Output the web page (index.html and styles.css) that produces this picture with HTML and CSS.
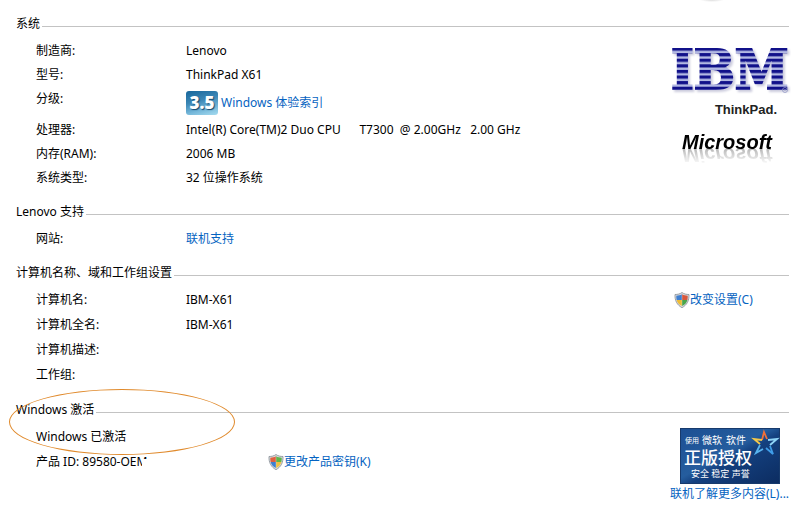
FILE: index.html
```html
<!DOCTYPE html>
<html lang="zh-CN">
<head>
<meta charset="utf-8">
<meta name="viewport" content="width=device-width,initial-scale=1.0">
<title>系统</title>
<link rel="stylesheet" href="styles.css">
</head>

<body>
<svg class="defs" width="0" height="0" aria-hidden="true">
	<defs>
		<symbol id="shield" viewBox="0 0 16 16">
			<path d="M8 .5C10 2 12.500 2.500 15 2.500C15.300 8.500 13 13 8 15.700C3 13 .7 8.500 1 2.500C3.500 2.500 6 2 8 .5z" fill="#d9dcdf" stroke="#858c93" stroke-width=".8"/>
			<path d="M7.800 2.300V8H2.600C2.300 6.500 2.200 5 2.300 3.800C4.500 3.700 6.200 3.300 7.800 2.300z" fill="#3f7fd0"/>
			<path d="M8.200 2.300V8H13.400C13.700 6.500 13.800 5 13.700 3.800C11.500 3.700 9.800 3.300 8.200 2.300z" fill="#d8573c"/>
			<path d="M7.800 8V14C5 12.500 3.200 10.500 2.600 8z" fill="#eebc35"/>
			<path d="M8.200 8V14C11 12.500 12.800 10.500 13.400 8z" fill="#4aa54a"/>
		</symbol>
		<symbol id="shield-alt" viewBox="0 0 16 16">
			<path d="M8 .5C10 2 12.500 2.500 15 2.500C15.300 8.500 13 13 8 15.700C3 13 .7 8.500 1 2.500C3.500 2.500 6 2 8 .5z" fill="#d9dcdf" stroke="#858c93" stroke-width=".8"/>
			<path d="M7.800 2.300V8H2.600C2.300 6.500 2.200 5 2.300 3.800C4.500 3.700 6.200 3.300 7.800 2.300z" fill="#e0603f"/>
			<path d="M8.200 2.300V8H13.400C13.700 6.500 13.800 5 13.700 3.800C11.500 3.700 9.800 3.300 8.200 2.300z" fill="#5fb548"/>
			<path d="M7.800 8V14C5 12.500 3.200 10.500 2.600 8z" fill="#3f7fd0"/>
			<path d="M8.200 8V14C11 12.500 12.800 10.500 13.400 8z" fill="#f0c040"/>
		</symbol>
	</defs>
</svg>

<main class="page">
	<section class="group">
		<h2 class="group-title">系统</h2>
		<div class="group-body">
			<dl class="list">
				<div class="row"><dt>制造商:</dt><dd>Lenovo</dd></div>
				<div class="row"><dt>型号:</dt><dd>ThinkPad X61</dd></div>
				<div class="row row-rating">
					<dt>分级:</dt>
					<dd class="rating"><span class="score">3.5</span><a href="#">Windows 体验索引</a></dd>
				</div>
				<div class="row"><dt>处理器:</dt><dd class="pre">Intel(R) Core(TM)2 Duo CPU      T7300  @ 2.00GHz   2.00 GHz</dd></div>
				<div class="row"><dt>内存(RAM):</dt><dd>2006 MB</dd></div>
				<div class="row"><dt>系统类型:</dt><dd>32 位操作系统</dd></div>
			</dl>
			<div class="logos">
				<svg width="124" height="56" viewBox="0 0 124 56" role="img" aria-label="IBM">
					<defs>
						<pattern id="stripes" width="10" height="5.6" y="8.500" patternUnits="userSpaceOnUse">
							<rect width="10" height="5.6" fill="#b3b9e3"/>
							<rect width="10" height="3.200" fill="#11118a"/>
						</pattern>
					</defs>
					<text class="ibm" x="3" y="50" fill="url(#stripes)" stroke="url(#stripes)">IBM</text>
					<circle cx="117" cy="51" r="2.500" fill="none" stroke="#9297c4" stroke-width=".8"/>
					<circle cx="117" cy="51" r=".8" fill="#9297c4"/>
				</svg>
				<div class="thinkpad">ThinkPad.</div>
				<div class="microsoft">Microsoft</div>
			</div>
		</div>
	</section>

	<section class="group">
		<h2 class="group-title">Lenovo 支持</h2>
		<div class="group-body">
			<dl class="list">
				<div class="row"><dt>网站:</dt><dd><a href="#">联机支持</a></dd></div>
			</dl>
		</div>
	</section>

	<section class="group">
		<h2 class="group-title">计算机名称、域和工作组设置</h2>
		<div class="group-body group-loose">
			<dl class="list">
				<div class="row"><dt>计算机名:</dt><dd>IBM-X61</dd></div>
				<div class="row"><dt>计算机全名:</dt><dd>IBM-X61</dd></div>
				<div class="row"><dt>计算机描述:</dt><dd></dd></div>
				<div class="row"><dt>工作组:</dt><dd></dd></div>
			</dl>
			<div class="change">
				<a class="shield-link" href="#"><svg width="16" height="16"><use href="#shield"/></svg>改变设置(C)</a>
			</div>
		</div>
	</section>

	<section class="group group-activation">
		<h2 class="group-title">Windows 激活</h2>
		<div class="group-body group-loose">
			<div class="list">
				<p class="line">Windows 已激活</p>
				<div class="line line-key">
					<span>产品 ID: 89580-OE<span class="cut">M</span></span>
					<a class="shield-link" href="#"><svg width="16" height="16"><use href="#shield-alt"/></svg>更改产品密钥(K)</a>
				</div>
			</div>
			<div class="genuine">
				<svg width="100" height="56" viewBox="0 0 100 56" role="img" aria-label="正版授权">
					<defs>
						<linearGradient id="badge" x1="0" y1="0" x2="1" y2="1">
							<stop offset="0" stop-color="#1c4f93"/>
							<stop offset=".45" stop-color="#255d9e"/>
							<stop offset=".55" stop-color="#14407f"/>
							<stop offset="1" stop-color="#0c2c60"/>
						</linearGradient>
					</defs>
					<rect width="100" height="56" fill="url(#badge)"/>
					<rect x=".5" y=".5" width="99" height="55" fill="none" stroke="#173a6c"/>
					<text class="badge-tiny" x="5" y="15">使用</text>
					<text class="badge-small" x="22" y="16">微软</text>
					<text class="badge-small" x="46" y="16">软件</text>
					<text class="badge-big" x="4" y="36">正版授权</text>
					<text class="badge-note" x="11" y="49">安全 稳定 声誉</text>
					<g fill="none" stroke-width="1.800">
						<path d="M82 12L84 4L87 11" stroke="#f0703a"/>
						<path d="M82 12L74 11L80 16" stroke="#f3c84a"/>
						<path d="M80 17L76 25L83 21" stroke="#58b4f0"/>
						<path d="M86 20L93 26L90 18" stroke="#3f9de8"/>
						<path d="M90 17L97 11L88 12" stroke="#8ed4f7"/>
					</g>
				</svg>
				<a href="#">联机了解更多内容(L)...</a>
			</div>
		</div>
		<span class="mark"></span>
	</section>
</main>
</body>

</html>
```
FILE: styles.css
```css
*,*:before,*:after{
	padding: 0;
	margin: 0;
	box-sizing: border-box;
}
body{
	background: #fff radial-gradient(ellipse 12px 2px at 712px 0, #ddd, #fff) no-repeat;
	font-family: "Noto Sans", "Noto Sans CJK SC", sans-serif;
	font-size: 12px;
	line-height: 24px;
	color: #000;
}
a{
	color: #0563c1;
	text-decoration: none;
}
a:hover{
	text-decoration: underline;
}
.defs{
	position: absolute;
}
.page{
	display: flex;
	flex-direction: column;
	gap: 12px;
	padding: 14px 2px 0 16px;
}
.group-title{
	display: flex;
	gap: 2px;
	margin-bottom: 5px;
	font-size: 12px;
	font-weight: normal;
	line-height: 20px;
}
.group-title:after{
	content: "";
	flex: 1;
	height: 1px;
	margin-top: 12px;
	background-color: #c3c3c3;
}
.group-body{
	display: flex;
	justify-content: space-between;
}
.group-loose{
	margin: -1px 0 1px;
	line-height: 25px;
}
.list{
	flex: 1;
	padding-left: 20px;
}
.row{
	display: grid;
	grid-template-columns: 150px 1fr;
}
.row-rating{
	min-height: 31px;
}
.pre{
	white-space: pre;
}
.rating{
	display: flex;
	align-items: center;
	gap: 3px;
}
.score{
	width: 32px;
	height: 24px;
	border-radius: 3px;
	background: linear-gradient(165deg, #17669b 0%, #3b86b5 40%, #72b5d8 70%, #a6dcf0 100%);
	font-family: "Open Sans", sans-serif;
	font-size: 17px;
	font-weight: 800;
	text-align: center;
	color: #fff;
	text-shadow: 1px 1px 1px #12456c;
}

/* logos */
.logos{
	display: flex;
	flex-direction: column;
	width: 121px;
	height: 0;
}
.logos svg{
	flex: none;
}
.ibm{
	font-family: "DejaVu Serif Condensed", "DejaVu Serif", serif;
	font-size: 54px;
	font-weight: bold;
	stroke-width: 2px;
	filter: drop-shadow(2px 2px 1px #ccd);
}
.thinkpad{
	padding: 5px 12px 0 0;
	font-family: "Liberation Sans", sans-serif;
	font-size: 13px;
	font-weight: bold;
	line-height: 20px;
	text-align: right;
	color: #222;
}
.microsoft{
	padding: 12px 0 0 14px;
	font-family: "Liberation Sans", sans-serif;
	font-size: 20px;
	font-weight: bold;
	font-style: italic;
	line-height: 20px;
	-webkit-box-reflect: below -7px linear-gradient(transparent 40%, rgba(0, 0, 0, .35));
}

.shield-link{
	display: inline-flex;
	align-items: center;
}
.change{
	width: 115px;
}

/* activation */
.group-activation{
	position: relative;
}
.line-key{
	display: grid;
	grid-template-columns: 232px 1fr;
}
.cut{
	clip-path: polygon(0 0, 100% 0, 100% 40%, 50% 40%, 50% 100%, 0 100%);
	display: inline-block;
}
.genuine{
	display: flex;
	flex-direction: column;
	gap: 2px;
	align-items: center;
	width: 119px;
	padding-top: 4px;
	line-height: 16px;
	white-space: nowrap;
}
.genuine text{
	fill: #fff;
}
.badge-tiny{
	font-size: 7px;
}
.badge-small{
	font-size: 10px;
}
.badge-big{
	font-size: 17px;
	font-weight: 500;
}
.badge-note{
	font-size: 9px;
}
.mark{
	position: absolute;
	left: -7px;
	top: -11px;
	width: 226px;
	height: 66px;
	border: 1px solid #e08a2c;
	border-radius: 50%;
}
```
